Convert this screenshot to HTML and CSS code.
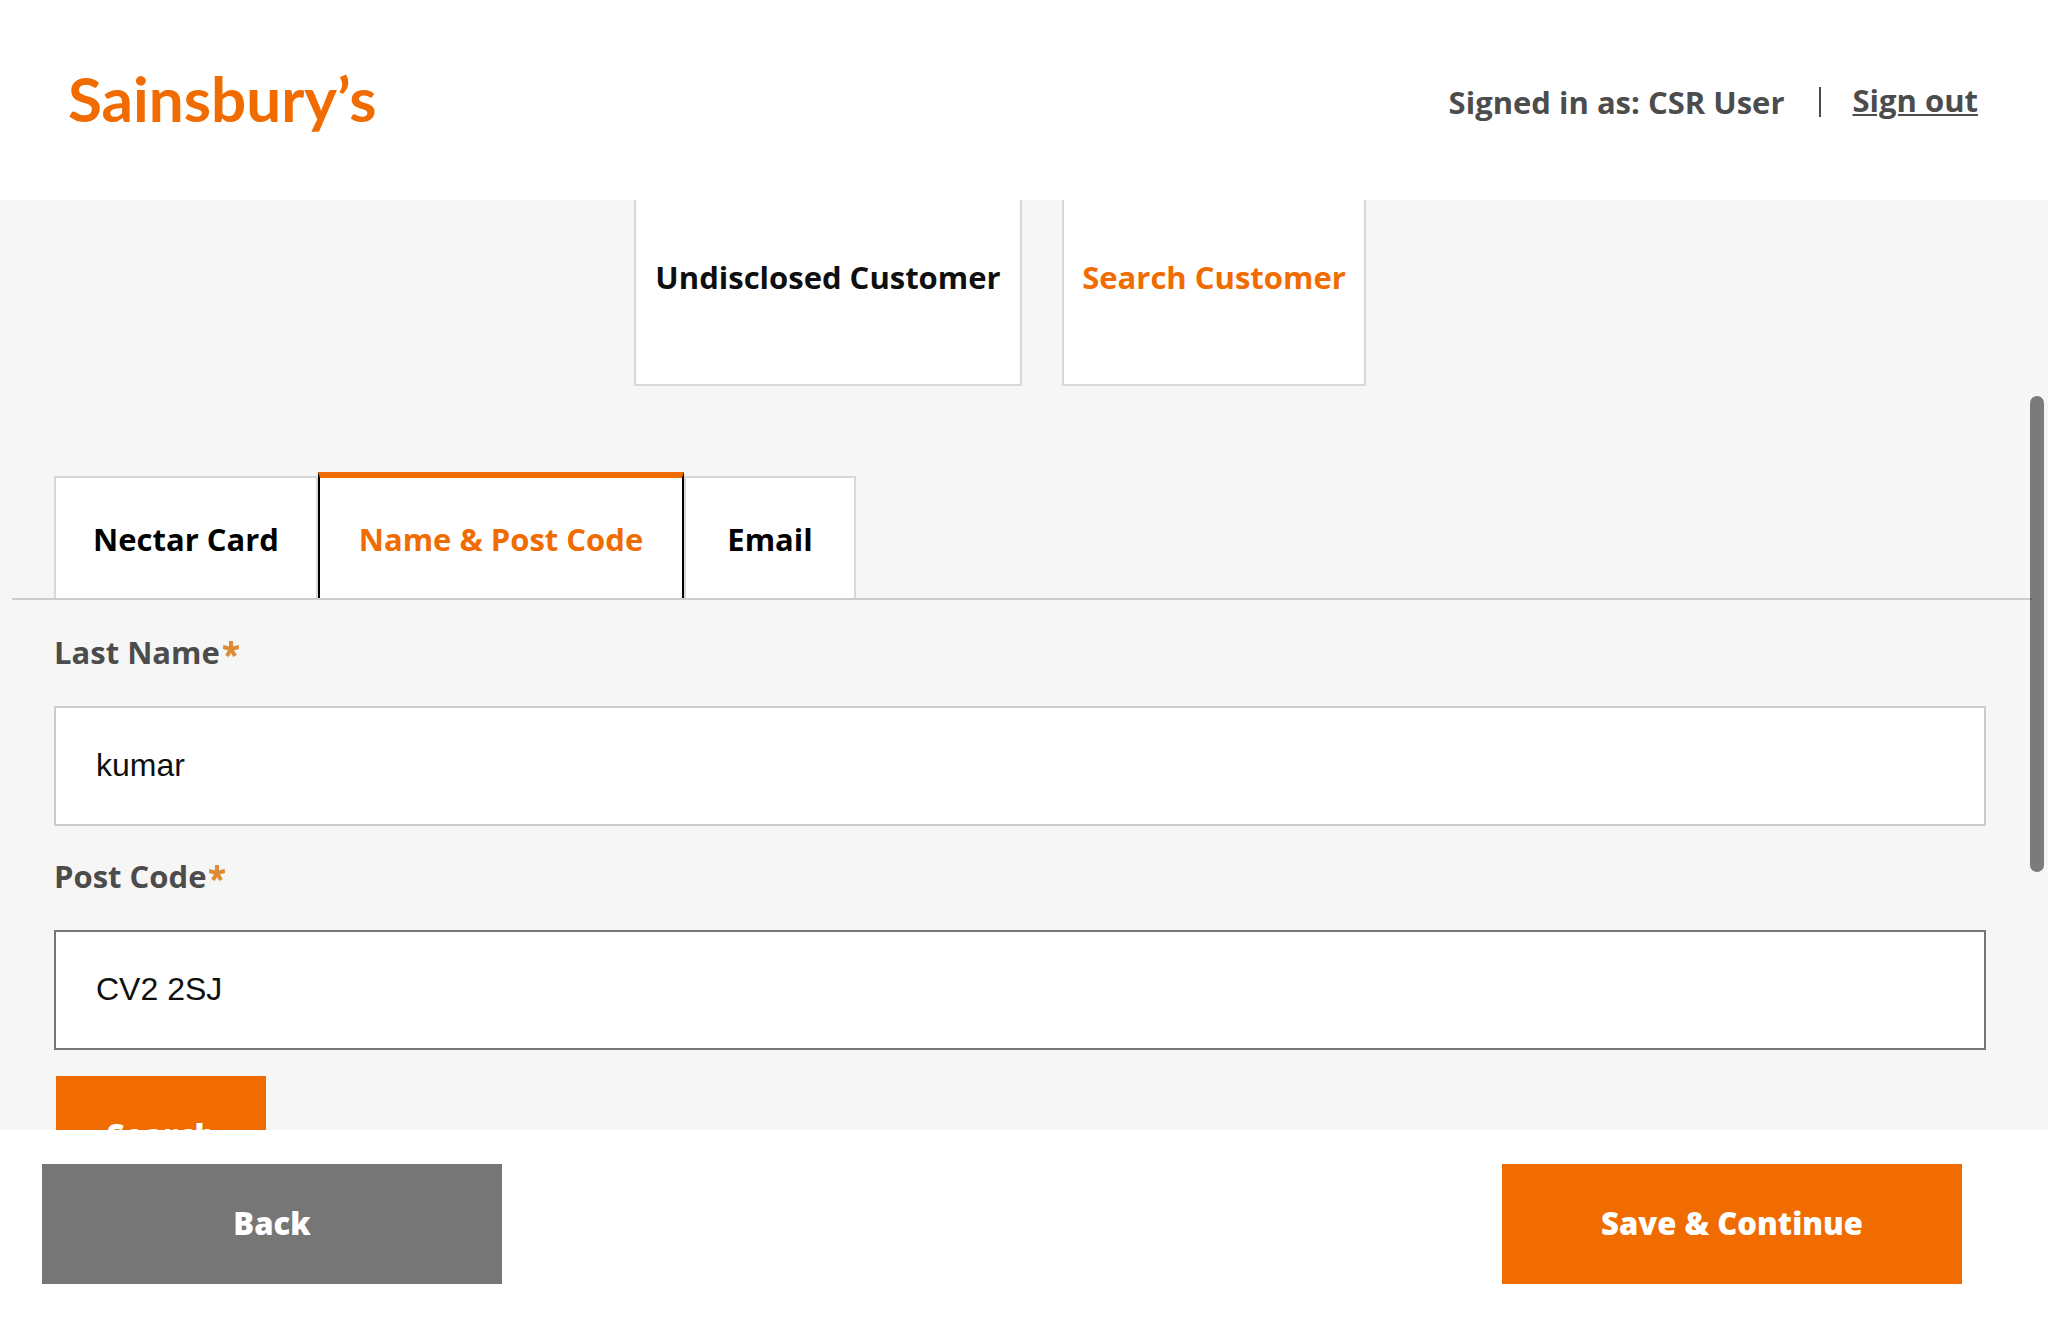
FILE: index.html
```html
<!DOCTYPE html>
<html lang="en">
<head>
  <meta charset="utf-8">
  <meta name="viewport" content="width=device-width, initial-scale=1">
  <title>Search Customer - Sainsbury's</title>
  <link rel="stylesheet" href="styles.css">
</head>
<body class="page">
  <header class="header">
    <div class="logo">Sainsbury’s</div>
    <div class="session">
      <span class="user">Signed in as: CSR User</span>
      <span class="divider" aria-hidden="true"></span>
      <a class="sign-out" href="#">Sign out</a>
    </div>
  </header>

  <main class="content">
    <div class="cards">
      <button class="card" type="button">Undisclosed Customer</button>
      <button class="card card-active" type="button">Search Customer</button>
    </div>

    <div class="tabs" role="tablist">
      <button class="tab tab-medium" type="button" role="tab">Nectar Card</button>
      <button class="tab tab-large tab-active" type="button" role="tab" aria-selected="true">Name &amp; Post Code</button>
      <button class="tab tab-small" type="button" role="tab">Email</button>
    </div>

    <form class="form">
      <label class="label" for="last-name">Last Name
        <svg class="required" viewBox="0 0 16 16" aria-hidden="true"><path d="M8 8V0M8 8L0 6M8 8L16 6M8 8L4 15M8 8L12 15"/></svg>
      </label>
      <input class="field" id="last-name" type="text" value="kumar">
      <label class="label" for="post-code">Post Code
        <svg class="required" viewBox="0 0 16 16" aria-hidden="true"><path d="M8 8V0M8 8L0 6M8 8L16 6M8 8L4 15M8 8L12 15"/></svg>
      </label>
      <input class="field field-current" id="post-code" type="text" value="CV2 2SJ">
      <button class="button search" type="button">Search</button>
    </form>
    <div class="scroll-thumb"></div>
  </main>

  <footer class="footer">
    <button class="button button-wide button-grey" type="button">Back</button>
    <button class="button button-wide" type="button">Save &amp; Continue</button>
  </footer>
</body>
</html>
```

FILE: styles.css
```css
* {
  box-sizing: border-box;
}

.page {
  display: grid;
  grid-template-rows: auto 1fr auto;
  height: 100vh;
  margin: 0;
  background: #fff;
  color: #4c4c4c;
  font: 700 31px/40px "Open Sans", sans-serif;
}

.page button {
  font-family: inherit;
  font-size: 31px;
  line-height: 40px;
  white-space: nowrap;
  cursor: pointer;
}

.header {
  display: flex;
  align-items: center;
  justify-content: space-between;
  height: 200px;
  padding: 0 70px 0 68px;
}

.logo {
  padding-bottom: 4px;
  color: #f06c00;
  font-family: Lato, sans-serif;
  font-size: 62px;
  line-height: 80px;
}

.session {
  display: flex;
  align-items: center;
}

.user {
  padding-top: 4px;
}

.divider {
  width: 2px;
  height: 30px;
  margin: 4px 32px 0 34px;
  background: #4c4c4c;
}

.sign-out {
  color: inherit;
  text-decoration-thickness: 2px;
  text-underline-offset: 2px;
}

.content {
  position: relative;
  min-height: 0;
  overflow: hidden;
  background: #f6f6f6;
}

.cards {
  display: flex;
  justify-content: center;
  gap: 40px;
  padding: 0 48px 0 0;
}

.card {
  width: 388px;
  padding: 57px 0 87px;
  border: 2px solid #d8d8d8;
  border-top: 0;
  background: #fff;
  color: #0f0f0f;
  font-weight: 700;
}

.card-active {
  width: 304px;
  color: #f06c00;
}

.tabs {
  display: flex;
  align-items: flex-end;
  margin: 86px 16px 0 12px;
  padding-left: 42px;
  border-bottom: 2px solid #ccc;
}

.tab {
  padding: 41px 0 39px;
  border: 2px solid #d8d8d8;
  border-bottom: 0;
  background: #fff;
  color: #000;
  font-weight: 700;
}

.tab-small {
  width: 172px;
}

.tab-medium {
  width: 264px;
}

.tab-large {
  width: 366px;
}

.tab-active {
  border-color: #000;
  border-top: 6px solid #f06c00;
  color: #f06c00;
}

.form {
  display: flex;
  flex-direction: column;
  padding: 2px 62px 0 54px;
}

.label {
  display: flex;
  align-items: center;
  gap: 3px;
  padding: 30px 0 34px;
}

.required {
  width: 16px;
  height: 16px;
  margin-bottom: 6px;
  fill: none;
  stroke: #dd8b35;
  stroke-width: 4;
}

.field {
  width: 100%;
  height: 120px;
  padding: 0 40px 2px;
  border: 2px solid #ccc;
  border-radius: 0;
  background: #fff;
  color: #0f0f0f;
  font: 400 32px/40px "Liberation Sans", Arial, sans-serif;
}

.field-current {
  border-color: #767676;
}

.button {
  height: 120px;
  padding: 0 40px 2px;
  border: 0;
  background: #f06c00;
  color: #fff;
  font-weight: 800;
}

.search {
  width: 210px;
  margin: 26px 0 0 2px;
}

.button-wide {
  width: 460px;
}

.button-grey {
  background: #767676;
}

.footer {
  display: flex;
  justify-content: space-between;
  padding: 34px 86px 48px 42px;
}

/* Overlay scroll indicator */
.scroll-thumb {
  position: absolute;
  top: 196px;
  right: 4px;
  width: 14px;
  height: 476px;
  border-radius: 7px;
  background: rgba(0, 0, 0, 0.5);
}
```
